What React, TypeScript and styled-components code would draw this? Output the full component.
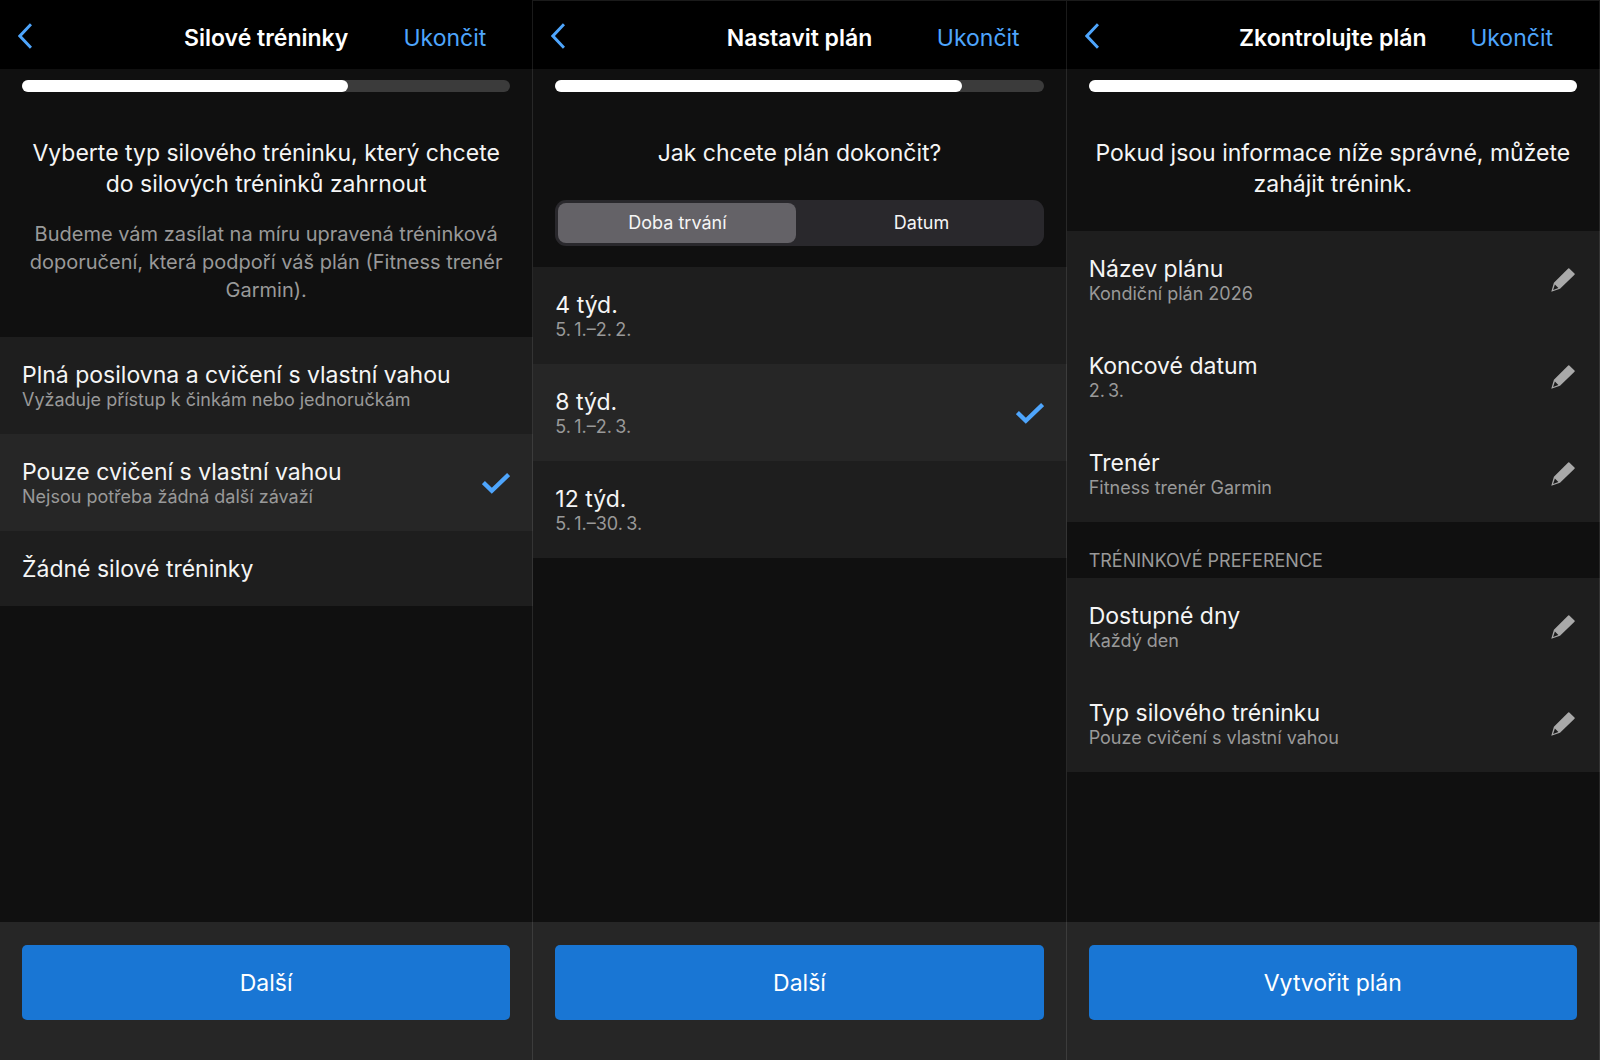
import React, { useId, useState } from "react";
import styled, { createGlobalStyle, css } from "styled-components";

const GlobalStyle = createGlobalStyle`
  *, *::before, *::after { box-sizing: border-box; }
  body {
    margin: 0;
    background: #101010;
    color: #f5f5f5;
    font-family: Inter, "Liberation Sans", sans-serif;
    -webkit-font-smoothing: antialiased;
  }
  button { font: inherit; color: inherit; background: none; border: 0; margin: 0; padding: 0; cursor: pointer; }
  h1, h2, h3, p, fieldset { margin: 0; padding: 0; border: 0; min-width: 0; font-weight: 400; }
`;

const Screens = styled.main`
  display: grid;
  grid-template-columns: repeat(3, minmax(0, 1fr));
  min-height: 100vh;
`;

const Screen = styled.section`
  position: relative;
  display: flex;
  flex-direction: column;
  background: #101010;

  &::after {
    content: "";
    position: absolute;
    inset: 0;
    border-right: 1px solid rgba(255, 255, 255, 0.1);
    pointer-events: none;
  }
  & + &::after {
    border-top: 1px solid rgba(255, 255, 255, 0.1);
  }
`;

const Header = styled.header`
  display: grid;
  grid-template-columns: 1fr auto 1fr;
  align-items: center;
  height: 69px;
  padding: 8px 19px 0 18px;
  background: #000;
`;

const BackButton = styled.button`
  justify-self: start;
  display: flex;
  padding-bottom: 5px;
  color: #4ea5fc;
`;

const ScreenTitle = styled.h1`
  && {
    font-weight: 600;
  }
  font-size: 23px;
  line-height: 31px;
  color: #fff;
`;

const QuitButton = styled.button`
  justify-self: end;
  padding-right: 28px;
  font-size: 23px;
  line-height: 31px;
  color: #4ea5fc;
`;

const Content = styled.div`
  flex: 1;
  padding-top: 11px;
`;

const gutter = css`
  padding-left: 22px;
  padding-right: 23px;
`;

const ProgressArea = styled.div`
  ${gutter}
`;

const Track = styled.div`
  height: 12px;
  border-radius: 6px;
  background: #3b3b3b;
`;

const Fill = styled.div`
  height: 100%;
  border-radius: 6px;
  background: #fff;
`;

const Intro = styled.div`
  ${gutter}
  padding-top: 46px;
  padding-bottom: 31px;
  text-align: center;
`;

const Question = styled.h2`
  font-size: 23px;
  line-height: 31px;
`;

const Description = styled.p`
  padding-top: 20px;
  padding-bottom: 2px;
  font-size: 20px;
  line-height: 28px;
  color: #999;
`;

const HiddenRadio = styled.input`
  position: absolute;
  opacity: 0;
  width: 1px;
  height: 1px;
  margin: 0;
`;

const SegmentArea = styled.div`
  ${gutter}
  padding-bottom: 21px;
`;

const Segments = styled.fieldset`
  && {
    padding: 3px;
  }
  display: grid;
  grid-template-columns: 1fr 1fr;
  gap: 6px;
  border-radius: 11px;
  background: #29282c;
`;

const Segment = styled.label<{ $active: boolean }>`
  position: relative;
  border-radius: 8px;
  background: ${(p) => (p.$active ? "#646267" : "transparent")};
  font-size: 18px;
  line-height: 40px;
  text-align: center;
  cursor: pointer;
`;

const List = styled.fieldset`
  display: flex;
  flex-direction: column;
`;

const rowBox = css`
  ${gutter}
  display: flex;
  align-items: center;
  justify-content: space-between;
  padding-top: 24px;
  padding-bottom: 23px;
  text-align: left;
  cursor: pointer;
`;

const OptionRow = styled.label<{ $active: boolean }>`
  ${rowBox}
  position: relative;
  background: ${(p) => (p.$active ? "#262626" : "#1e1e1e")};
`;

const EditRow = styled.button`
  && {
    ${rowBox}
    background: #1e1e1e;
  }
`;

const RowText = styled.span`
  display: flex;
  flex-direction: column;
`;

const RowTitle = styled.span`
  font-size: 23px;
  line-height: 28px;
`;

const RowNote = styled.span`
  font-size: 18px;
  line-height: 22px;
  color: #999;
`;

const PencilSlot = styled.span`
  display: flex;
  padding-right: 2px;
`;

const SectionTitle = styled.h3`
  && {
    ${gutter}
    padding-top: 28px;
    padding-bottom: 6px;
  }
  font-size: 18px;
  line-height: 22px;
  color: #999;
`;

const Footer = styled.footer`
  ${gutter}
  padding-top: 23px;
  padding-bottom: 40px;
  background: #262626;
`;

const PrimaryButton = styled.button`
  && {
    width: 100%;
    padding-top: 1px;
    border-radius: 5px;
    background: #1976d4;
    color: #fff;
    font-size: 23px;
    line-height: 74px;
  }
  display: block;
`;

const ChevronIcon = () => (
  <svg width="14" height="26" viewBox="0 0 14 26" fill="none" aria-hidden="true">
    <path d="M13 1.2 1.9 13 13 24.8" stroke="currentColor" strokeWidth="3" />
  </svg>
);

const CheckIcon = () => (
  <svg width="28" height="21" viewBox="0 0 28 21" fill="none" aria-hidden="true">
    <path d="M1.4 9.6 9.8 17.8 26.6 1.6" stroke="#4ea5fc" strokeWidth="4.4" />
  </svg>
);

const PencilIcon = () => (
  <svg width="24" height="24" viewBox="0 0 24 24" aria-hidden="true">
    <path
      d="M17.2.4a.8.8 0 0 1 1.1 0l5.2 5.2a.8.8 0 0 1 0 1.1L9 20.8.3 23.8 2.9 14.8zM3.9 16.4 2.1 22 7.4 19.9z"
      fill="#a9a9a9"
      fillRule="evenodd"
    />
  </svg>
);

type Item = { title: string; note?: string };

type StepProps = {
  title: string;
  progress: number;
  action: string;
  children: React.ReactNode;
};

const Step = ({ title, progress, action, children }: StepProps) => (
  <Screen>
    <Header>
      <BackButton type="button" aria-label="Zpět">
        <ChevronIcon />
      </BackButton>
      <ScreenTitle>{title}</ScreenTitle>
      <QuitButton type="button">Ukončit</QuitButton>
    </Header>
    <Content>
      <ProgressArea>
        <Track role="progressbar" aria-label={title} aria-valuenow={Math.round(progress * 100)}>
          <Fill style={{ width: `${progress * 100}%` }} />
        </Track>
      </ProgressArea>
      {children}
    </Content>
    <Footer>
      <PrimaryButton type="button">{action}</PrimaryButton>
    </Footer>
  </Screen>
);

const OptionList = ({ items, initial }: { items: Item[]; initial: number }) => {
  const [selected, setSelected] = useState(initial);
  const name = useId();
  return (
    <List>
      {items.map((item, i) => (
        <OptionRow key={item.title} $active={i === selected} htmlFor={`${name}-${i}`}>
          <HiddenRadio
            type="radio"
            id={`${name}-${i}`}
            name={name}
            checked={i === selected}
            onChange={() => setSelected(i)}
          />
          <RowText>
            <RowTitle>{item.title}</RowTitle>
            {item.note && <RowNote>{item.note}</RowNote>}
          </RowText>
          {i === selected && <CheckIcon />}
        </OptionRow>
      ))}
    </List>
  );
};

const EditList = ({ items }: { items: Item[] }) => (
  <List>
    {items.map((item) => (
      <EditRow key={item.title} type="button">
        <RowText>
          <RowTitle>{item.title}</RowTitle>
          <RowNote>{item.note}</RowNote>
        </RowText>
        <PencilSlot>
          <PencilIcon />
        </PencilSlot>
      </EditRow>
    ))}
  </List>
);

const SegmentedControl = ({ labels }: { labels: string[] }) => {
  const [selected, setSelected] = useState(0);
  const name = useId();
  return (
    <SegmentArea>
      <Segments>
        {labels.map((label, i) => (
          <Segment key={label} $active={i === selected} htmlFor={`${name}-${i}`}>
            <HiddenRadio
              type="radio"
              id={`${name}-${i}`}
              name={name}
              checked={i === selected}
              onChange={() => setSelected(i)}
            />
            {label}
          </Segment>
        ))}
      </Segments>
    </SegmentArea>
  );
};

const strengthTypes: Item[] = [
  { title: "Plná posilovna a cvičení s vlastní vahou", note: "Vyžaduje přístup k činkám nebo jednoručkám" },
  { title: "Pouze cvičení s vlastní vahou", note: "Nejsou potřeba žádná další závaží" },
  { title: "Žádné silové tréninky" },
];

const durations: Item[] = [
  { title: "4 týd.", note: "5.\u20091.–2.\u20092." },
  { title: "8 týd.", note: "5.\u20091.–2.\u20093." },
  { title: "12 týd.", note: "5.\u20091.–30.\u20093." },
];

const planDetails: Item[] = [
  { title: "Název plánu", note: "Kondiční plán 2026" },
  { title: "Koncové datum", note: "2.\u20093." },
  { title: "Trenér", note: "Fitness trenér Garmin" },
];

const preferences: Item[] = [
  { title: "Dostupné dny", note: "Každý den" },
  { title: "Typ silového tréninku", note: "Pouze cvičení s vlastní vahou" },
];

export default function App() {
  return (
    <>
      <GlobalStyle />
      <Screens>
        <Step title="Silové tréninky" progress={4 / 6} action="Další">
          <Intro>
            <Question>Vyberte typ silového tréninku, který chcete do silových tréninků zahrnout</Question>
            <Description>
              Budeme vám zasílat na míru upravená tréninková doporučení, která podpoří váš plán (Fitness trenér
              Garmin).
            </Description>
          </Intro>
          <OptionList items={strengthTypes} initial={1} />
        </Step>
        <Step title="Nastavit plán" progress={5 / 6} action="Další">
          <Intro>
            <Question>Jak chcete plán dokončit?</Question>
          </Intro>
          <SegmentedControl labels={["Doba trvání", "Datum"]} />
          <OptionList items={durations} initial={1} />
        </Step>
        <Step title="Zkontrolujte plán" progress={1} action="Vytvořit plán">
          <Intro>
            <Question>Pokud jsou informace níže správné, můžete zahájit trénink.</Question>
          </Intro>
          <EditList items={planDetails} />
          <SectionTitle>TRÉNINKOVÉ PREFERENCE</SectionTitle>
          <EditList items={preferences} />
        </Step>
      </Screens>
    </>
  );
}
